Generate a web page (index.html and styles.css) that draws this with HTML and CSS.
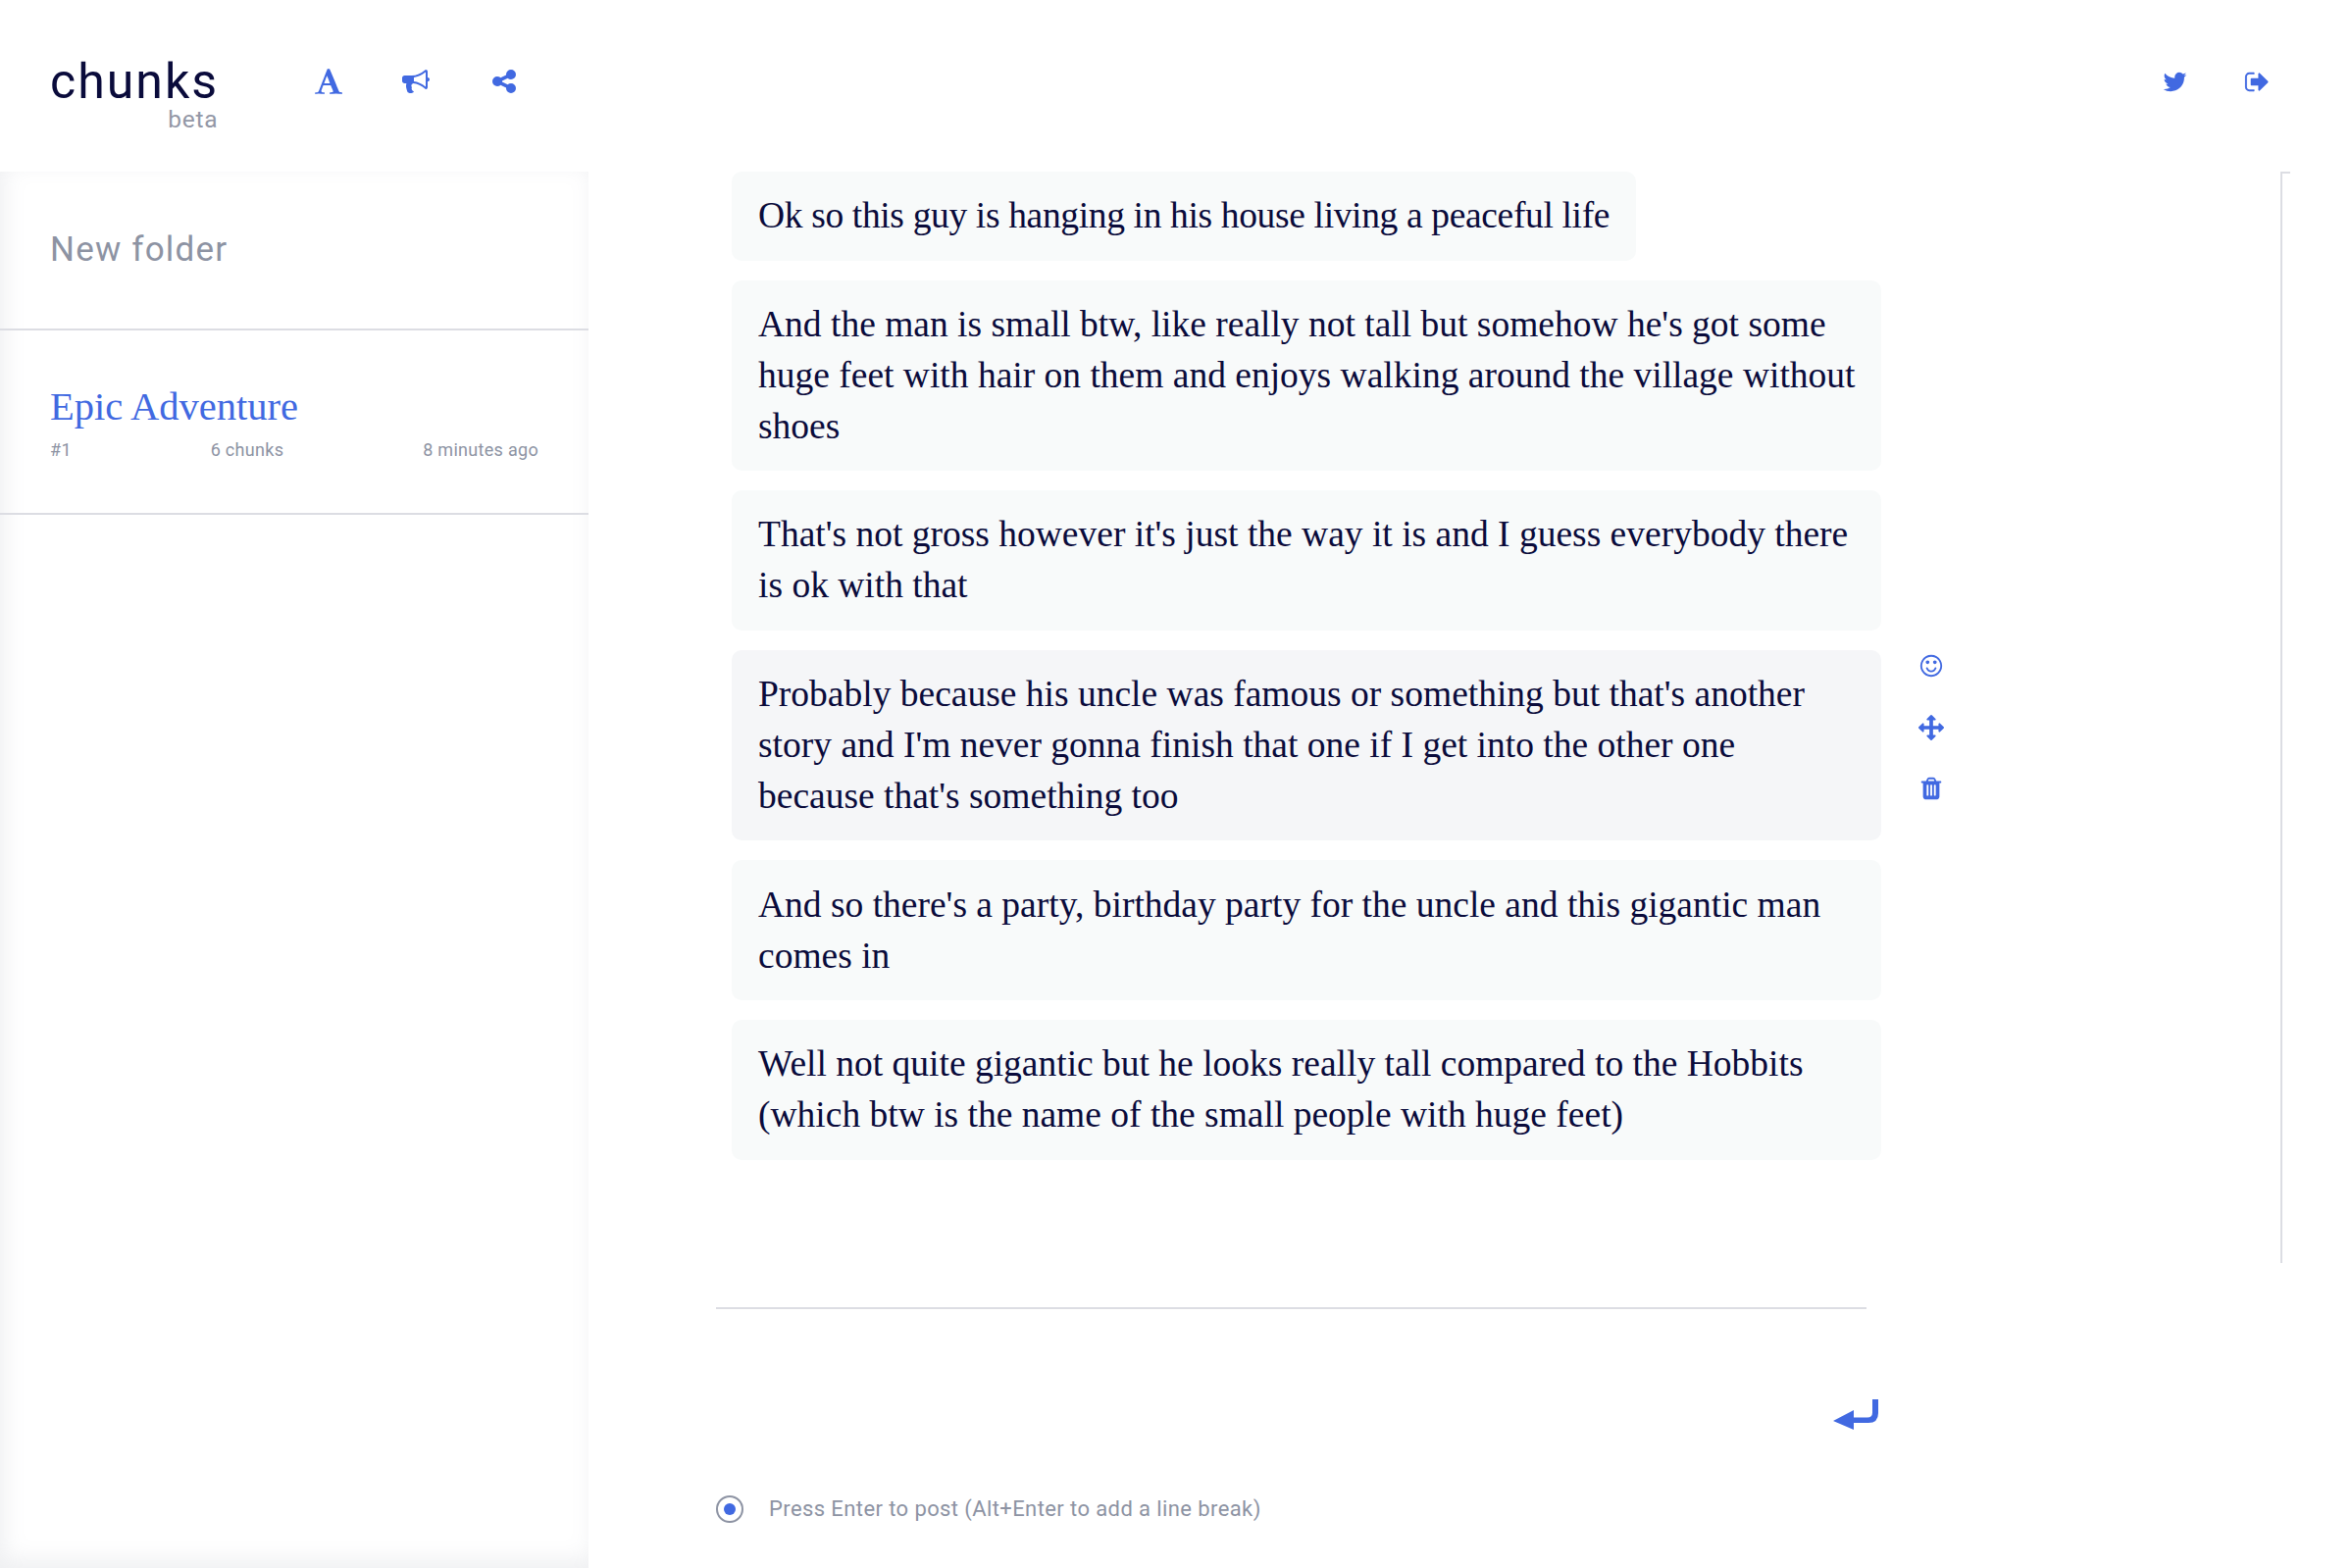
FILE: index.html
```html
<!DOCTYPE html>
<html lang="en">
<head>
<meta charset="utf-8">
<title>chunks</title>
<link rel="stylesheet" href="styles.css">
</head>
<body>
<svg class="defs" width="0" height="0" aria-hidden="true">
  <symbol id="i-font" viewBox="0 0 1664 1792"><path d="M789 559l-170 450q33 0 136.5 2t160.5 2q19 0 57-2-87-253-184-452zm-725 1105l2-79q23-7 56-12.5t57-10.5 49.5-14.5 44.5-29 31-50.5l237-616 280-724h128q8 14 11 21l205 480q33 78 106 257.5t114 274.5q15 34 58 144.5t72 168.5q20 45 35 57 19 15 88 29.5t84 20.5q6 38 6 57 0 5-.5 13.5t-.5 12.5q-63 0-190-8t-191-8q-76 0-215 7t-178 8q0-43 4-78l131-28q1 0 12.5-2.5t15.5-3.5 14.5-4.5 15-6.5 11-8 9-11 2.5-14q0-16-31-96.5t-72-177.5-42-100l-450-2q-26 58-76.5 195.5t-50.5 162.5q0 22 14 37.5t43.5 24.5 49.5 13.5 58.5 8.5 40.5 4q1 19 1 58 0 9-2 27-58 0-174.5-10t-174.5-10q-8 0-26.5 4t-21.5 4q-80 14-188 14z"/></symbol>
  <symbol id="i-horn" viewBox="0 0 1792 1792"><path d="M1664 640q53 0 90.5 37.5t37.5 90.5-37.5 90.5-90.5 37.5v384q0 52-38 90t-90 38q-417-347-812-380-58 19-91 66t-31 100.5 40 92.5q-20 33-23 65.5t6 58 33.5 55 48 50 61.5 50.5q-29 58-111.5 83t-168.5 11.5-132-55.5q-7-23-29.5-87.5t-32-94.5-23-89-15-101 3.5-98.5 22-110.5h-122q-66 0-113-47t-47-113v-192q0-66 47-113t113-47h480q435 0 896-384 52 0 90 38t38 90v384zm-128 604v-954q-394 302-768 343v270q377 42 768 341z"/></symbol>
  <symbol id="i-share" viewBox="0 0 1792 1792"><path d="M1344 1024q133 0 226.5 93.5t93.5 226.5-93.5 226.5-226.5 93.5-226.5-93.5-93.5-226.5q0-12 2-34l-360-180q-92 86-218 86-133 0-226.5-93.5t-93.5-226.5 93.5-226.5 226.5-93.5q126 0 218 86l360-180q-2-22-2-34 0-133 93.5-226.5t226.5-93.5 226.5 93.5 93.5 226.5-93.5 226.5-226.5 93.5q-126 0-218-86l-360 180q2 22 2 34t-2 34l360 180q92-86 218-86z"/></symbol>
  <symbol id="i-twitter" viewBox="0 0 1792 1792"><path d="M1684 408q-67 98-162 167 1 14 1 42 0 130-38 259.5t-115.5 248.5-184.5 210.5-258 146-323 54.5q-271 0-496-145 35 4 78 4 225 0 401-138-105-2-188-64.5t-114-159.5q33 5 61 5 43 0 85-11-112-23-185.5-111.5t-73.5-205.5v-4q68 38 146 41-66-44-105-115t-39-154q0-88 44-163 121 149 294.5 238.5t371.5 99.5q-8-38-8-74 0-134 94.5-228.5t228.5-94.5q140 0 236 102 109-21 205-78-37 115-142 178 92-10 184-50z"/></symbol>
  <symbol id="i-signout" viewBox="0 0 1664 1792"><path d="M704 1440q0 4 1 20t.5 26.5-3 23.5-10 19.5-20.5 6.5h-320q-119 0-203.5-84.5t-84.5-203.5v-704q0-119 84.5-203.5t203.5-84.5h320q13 0 22.5 9.5t9.5 22.5q0 4 1 20t.5 26.5-3 23.5-10 19.5-20.5 6.5h-320q-66 0-113 47t-47 113v704q0 66 47 113t113 47h312l11.5 1 11.5 3 8 5.5 7 9 2 13.5zm928-544q0 26-19 45l-544 544q-19 19-45 19t-45-19-19-45v-288h-448q-26 0-45-19t-19-45v-384q0-26 19-45t45-19h448v-288q0-26 19-45t45-19 45 19l544 544q19 19 19 45z"/></symbol>
  <symbol id="i-smile" viewBox="0 0 1536 1792"><path d="M1134 1075q-37 121-138 195t-228 74-228-74-138-195q-8-25 4-48.5t38-31.5q25-8 48.5 4t31.5 38q25 80 92.5 129.5t151.5 49.5 151.5-49.5 92.5-129.5q8-26 32-38t49-4 37 31.5 4 48.5zm-494-435q0 53-37.5 90.5t-90.5 37.5-90.5-37.5-37.5-90.5 37.5-90.5 90.5-37.5 90.5 37.5 37.5 90.5zm512 0q0 53-37.5 90.5t-90.5 37.5-90.5-37.5-37.5-90.5 37.5-90.5 90.5-37.5 90.5 37.5 37.5 90.5zm256 256q0-130-51-248.5t-136.5-204-204-136.5-248.5-51-248.5 51-204 136.5-136.5 204-51 248.5 51 248.5 136.5 204 204 136.5 248.5 51 248.5-51 204-136.5 136.5-204 51-248.5zm128 0q0 209-103 385.5t-279.5 279.5-385.5 103-385.5-103-279.5-279.5-103-385.5 103-385.5 279.5-279.5 385.5-103 385.5 103 279.5 279.5 103 385.5z"/></symbol>
  <symbol id="i-move" viewBox="0 0 1792 1792"><path d="M1792 896q0 26-19 45l-256 256q-19 19-45 19t-45-19-19-45v-128h-384v384h128q26 0 45 19t19 45-19 45l-256 256q-19 19-45 19t-45-19l-256-256q-19-19-19-45t19-45 45-19h128v-384h-384v128q0 26-19 45t-45 19-45-19l-256-256q-19-19-19-45t19-45l256-256q19-19 45-19t45 19 19 45v128h384v-384h-128q-26 0-45-19t-19-45 19-45l256-256q19-19 45-19t45 19l256 256q19 19 19 45t-19 45-45 19h-128v384h384v-128q0-26 19-45t45-19 45 19l256 256q19 19 19 45z"/></symbol>
  <symbol id="i-trash" viewBox="0 0 1408 1792"><path d="M512 1376v-704q0-14-9-23t-23-9h-64q-14 0-23 9t-9 23v704q0 14 9 23t23 9h64q14 0 23-9t9-23zm256 0v-704q0-14-9-23t-23-9h-64q-14 0-23 9t-9 23v704q0 14 9 23t23 9h64q14 0 23-9t9-23zm256 0v-704q0-14-9-23t-23-9h-64q-14 0-23 9t-9 23v704q0 14 9 23t23 9h64q14 0 23-9t9-23zm-544-992h448l-48-117q-7-9-17-11h-317q-10 2-17 11zm928 32v64q0 14-9 23t-23 9h-96v948q0 83-47 143.5t-113 60.5h-832q-66 0-113-58.5t-47-141.5v-952h-96q-14 0-23-9t-9-23v-64q0-14 9-23t23-9h309l70-167q15-37 54-63t79-26h320q40 0 79 26t54 63l70 167h309q14 0 23 9t9 23z"/></symbol>
</svg>

<header class="topbar">
  <div class="brand">
    <div class="brand-name">chunks</div>
    <div class="brand-tag">beta</div>
  </div>
  <nav class="tools">
    <svg class="icon icon-tool icon-font"><use href="#i-font"/></svg>
    <svg class="icon icon-tool"><use href="#i-horn"/></svg>
    <svg class="icon icon-tool"><use href="#i-share"/></svg>
  </nav>
  <nav class="account">
    <svg class="icon icon-account"><use href="#i-twitter"/></svg>
    <svg class="icon icon-account"><use href="#i-signout"/></svg>
  </nav>
</header>

<main class="layout">
  <aside class="sidebar">
    <div class="new-folder">New folder</div>
    <div class="story">
      <div class="story-title">Epic Adventure</div>
      <div class="story-meta"><span>#1</span><span>6 chunks</span><span>8 minutes ago</span></div>
    </div>
  </aside>
  <section class="editor">
    <div class="scroll-mark"></div>
    <div class="chunks">
      <div class="chunk chunk-fit">Ok so this guy is hanging in his house living a peaceful life</div>
      <div class="chunk">And the man is small btw, like really not tall but somehow he's got some<br>huge feet with hair on them and enjoys walking around the village without<br>shoes</div>
      <div class="chunk">That's not gross however it's just the way it is and I guess everybody there<br>is ok with that</div>
      <div class="chunk chunk-active">Probably because his uncle was famous or something but that's another<br>story and I'm never gonna finish that one if I get into the other one<br>because that's something too
        <div class="chunk-actions">
          <svg class="icon icon-action"><use href="#i-smile"/></svg>
          <svg class="icon icon-action"><use href="#i-move"/></svg>
          <svg class="icon icon-action"><use href="#i-trash"/></svg>
        </div>
      </div>
      <div class="chunk">And so there's a party, birthday party for the uncle and this gigantic man<br>comes in</div>
      <div class="chunk">Well not quite gigantic but he looks really tall compared to the Hobbits<br>(which btw is the name of the small people with huge feet)</div>
    </div>
    <div class="composer">
      <div class="composer-input">
        <svg class="enter" viewBox="0 0 46 31"><path d="M0 22L21 11v7.500h14q5 0 5-5V0h6v14q0 10-10 10H21v7z"/></svg>
      </div>
      <label class="composer-option">
        <span class="radio"><span class="radio-dot"></span></span>
        <span>Press Enter to post (Alt+Enter to add a line break)</span>
      </label>
    </div>
  </section>
</main>
</body>
</html>
```

FILE: styles.css
```css
* { box-sizing: border-box; }
html, body { margin: 0; padding: 0; height: 100%; background: #fff; overflow: hidden; }
body { font-family: Roboto, "Liberation Sans", sans-serif; color: #0a0b3b; }
.defs { position: absolute; }
.icon { display: block; fill: #4169e1; }

.topbar { height: 175px; display: flex; align-items: flex-start; padding: 0 52px 0 51px; }
.brand { width: 170px; padding-top: 58px; }
.brand-name { font-size: 50px; line-height: 50px; letter-spacing: 2px; white-space: nowrap; }
.brand-tag { font-size: 24.500px; line-height: 28px; margin-right: -1.500px; color: #9397a6; text-align: right; letter-spacing: .8px; }
.tools { display: flex; gap: 62px; margin-left: 99px; padding-top: 69px; }
.icon-tool { width: 28px; height: 28px; }
.icon-font { width: 30px; height: 30px; margin: -1px; }
.account { display: flex; gap: 56px; margin-left: auto; padding-top: 70px; margin-right: 32px; }
.icon-account { width: 27px; height: 27px; }

.layout { display: flex; height: 1424px; }
.sidebar { width: 600px; flex: none; box-shadow: inset 4px -8px 22px rgba(120, 130, 150, .13); }
.new-folder { height: 162px; border-bottom: 2px solid #dcdde3; padding: 57px 51px 0; font-size: 35px; line-height: 46px; letter-spacing: 1.2px; color: #8d93a3; }
.story { height: 188px; border-bottom: 2px solid #dcdde3; padding: 55px 51px 0; }
.story-title { font-family: "Liberation Serif", serif; font-size: 40.5px; line-height: 46px; color: #4169e1; }
.story-meta { display: flex; justify-content: space-between; margin-top: 9px; font-size: 18px; line-height: 24px; letter-spacing: .3px; color: #8d93a3; }

.editor { flex: 1; position: relative; padding-left: 146px; display: flex; flex-direction: column; }
.scroll-mark { position: absolute; left: 1725px; top: 0; width: 10px; height: 1113px; border-left: 2px solid #dcdde3; border-top: 2px solid #dcdde3; }
.chunks { width: 1172px; height: 1158px; display: flex; flex-direction: column; align-items: flex-start; gap: 20px; }
.chunk { width: 100%; position: relative; padding: 19.3px 27px; background: #f8fafa; border-radius: 10px; font-family: "Liberation Serif", serif; font-size: 37.5px; line-height: 52px; color: #0a0b3b; white-space: nowrap; }
.chunk-fit { width: auto; letter-spacing: -.35px; }
.chunk-active { background: #f5f6f8; }
.chunk-actions { position: absolute; left: 1171px; top: 0; width: 104px; height: 100%; display: flex; flex-direction: column; align-items: center; gap: 36.5px; padding-top: 3.500px; }
.icon-action { width: 26px; height: 26px; }

.composer { margin-left: -16px; width: 1173px; height: 266px; border-top: 2px solid #dcdde3; position: relative; }
.composer-input { height: 190px; display: flex; justify-content: flex-end; align-items: flex-start; padding: 92px 0 0; }
.enter { width: 46px; height: 31px; fill: #4169e1; margin-right: -12px; }
.composer-option { display: flex; align-items: center; gap: 26px; font-size: 22px; line-height: 28px; color: #8d93a3; letter-spacing: .4px; }
.radio { width: 28px; height: 28px; border: 2px solid #8d93a3; border-radius: 50%; display: flex; align-items: center; justify-content: center; flex: none; }
.radio-dot { width: 12px; height: 12px; background: #4169e1; border-radius: 50%; }
```
